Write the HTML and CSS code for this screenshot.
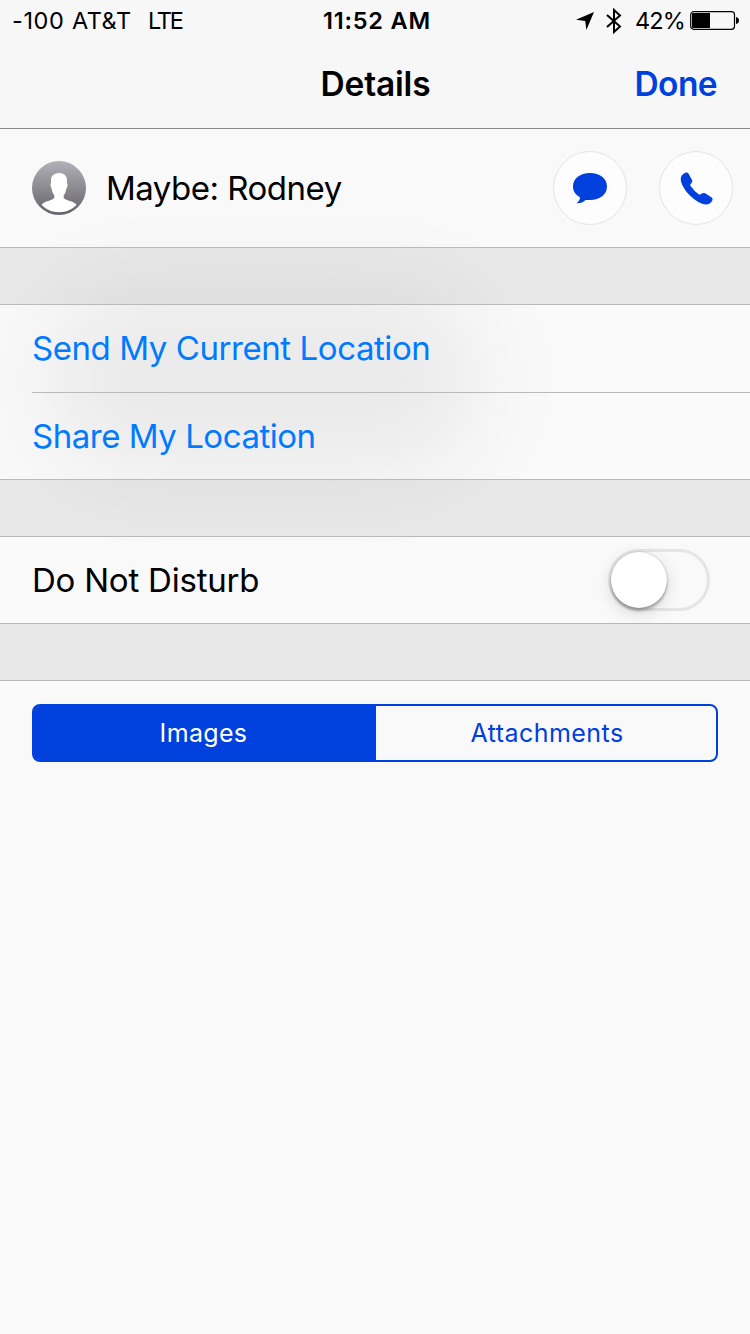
FILE: index.html
```
<!DOCTYPE html>
<html lang="en">
<head>
<meta charset="utf-8">
<title>Details</title>
<link rel="stylesheet" href="styles.css">
</head>
<body>
<div class="screen">
  <div class="glow"></div>
  <header class="top">
    <div class="status">
      <div class="status-left"><span class="signal">-100</span><span class="carrier">AT&amp;T</span><span class="network">LTE</span></div>
      <div class="clock"><span>11:52 AM</span></div>
      <div class="status-right">
        <svg class="location" width="18" height="18" viewBox="0 0 18 18"><path d="M18 0 10.4 18 9.2 9 0 7.8Z"/></svg>
        <svg class="bluetooth" width="16" height="26" viewBox="0 0 16 26"><path d="M1 7 14 18.6 8 24V2L14 7.4 1 19" fill="none" stroke="#000" stroke-width="2"/></svg>
        <span class="percent">42%</span>
        <svg class="battery" width="50" height="19" viewBox="0 0 50 19"><rect x=".7" y=".7" width="43.8" height="17.6" rx="3" fill="none" stroke="#000" stroke-width="1.2"/><path d="M2 2.8Q2 2 2.8 2H20V17H2.8Q2 17 2 16.200ZM46 6q3 .5 3 3.500T46 13Z"/></svg>
      </div>
    </div>
    <nav class="nav">
      <span class="side"></span>
      <h1 class="title"><span>Details</span></h1>
      <a class="done side">Done</a>
    </nav>
  </header>
  <section class="contact">
    <svg class="avatar" width="54" height="54" viewBox="0 0 54 54">
      <defs><linearGradient id="shade" x2="0" y2="1"><stop offset="0" stop-color="#b2b1b7"/><stop offset="1" stop-color="#656369"/></linearGradient></defs>
      <circle cx="27" cy="27" r="27" fill="url(#shade)"/>
      <path d="M27.300 12C32 12 35.300 14.800 35 20V22.200C36 22.500 35.500 27 34.300 27.500C34 30.500 33 33 31.700 34.300V37C33 39.500 42 40 44.600 43.700C40 48.500 34 51.200 27 51.200S14 48.500 9.600 43.700C12 40 21 39.500 22.300 37V34.300C21 33 20 30.500 19.700 27.500C18.700 27 18 22.500 19 22.200V20C18.700 14.800 22.300 12 27.300 12Z" fill="#fff"/>
    </svg>
    <span class="name">Maybe: Rodney</span>
    <button class="round" aria-label="Message"><svg width="34" height="31" viewBox="0 0 34 31"><path d="M17 0C27 0 34 5.500 34 13.500S27 27 17 27H12.500C10 29.400 7 30.600 3.300 30.200C5.800 28.500 7 26.500 7 24.200C2.500 22 0 18.300 0 13.500C0 5.500 7 0 17 0Z"/></svg></button>
    <button class="round" aria-label="Call"><svg class="phone" width="33" height="33" viewBox="0 0 33 33"><path transform="translate(.7 .5)" d="M4.600.3Q6.700-.6 7.700 1L11.500 7.800Q12 9.200 10.900 10.400L9.800 11.600Q9.200 12.500 9.900 13.600Q13.300 18.600 18 21.800Q19 22.500 20 21.700L21.600 20.800Q23 20 24.500 20.800L31 25Q32.500 26.100 31.700 27.800Q29.300 32.300 25 32.100Q18 31.500 9.500 23.300C4 18 .4 11.500 0 7Q-.1 2.200 4.600.3Z"/></svg></button>
  </section>
  <div class="gap"></div>
  <section class="locations">
    <a class="row link send"><span>Send My Current Location</span></a>
    <a class="row link share"><span>Share My Location</span></a>
  </section>
  <div class="gap"></div>
  <section class="row dnd">
    <span>Do Not Disturb</span>
    <span class="switch" role="switch" aria-checked="false"><span class="knob"></span></span>
  </section>
  <div class="gap"></div>
  <div class="tabs">
    <button class="tab active"><span>Images</span></button>
    <button class="tab"><span>Attachments</span></button>
  </div>
</div>
</body>
</html>
```
FILE: styles.css
```
* { box-sizing: border-box; }
body { margin: 0; background: #f9f9f9; color: #000; font-family: Inter, "Liberation Sans", sans-serif; }
button { font: inherit; border: 0; padding: 0; margin: 0; }
svg { display: block; flex: none; overflow: visible; }
.screen { position: relative; isolation: isolate; width: 750px; height: 1334px; overflow: hidden; background: #f9f9f9; }
.glow { position: absolute; z-index: -1; left: 50px; top: 290px; width: 425px; height: 180px; border-radius: 75px; background: rgba(25, 25, 45, .068); filter: blur(42px); }
.top { height: 129px; background: #f7f7f7; border-bottom: 1px solid #88878e; }
.status { height: 41px; display: grid; grid-template-columns: 1fr 110px 1fr; align-items: center; font-size: 23.5px; line-height: 41px; white-space: nowrap; }
.status-left { display: flex; padding-left: 12px; }
.signal { width: 60px; letter-spacing: .6px; }
.carrier { width: 76px; letter-spacing: .5px; }
.network { letter-spacing: -2.2px; }
.clock { font-weight: 600; text-align: center; letter-spacing: .8px; padding-left: 3px; }
.status-right { display: flex; align-items: center; justify-content: flex-end; padding-right: 10px; }
.bluetooth { margin-left: 12px; }
.percent { margin-left: 13px; width: 55px; letter-spacing: -.9px; }
.nav { height: 87px; display: grid; grid-template-columns: 1fr auto 1fr; align-items: center; padding: 0 33px 0 32px; font-size: 33.5px; line-height: 87px; }
.title { margin: 0; font-size: inherit; font-weight: 600; letter-spacing: -.2px; padding-left: 2px; }
.done { text-align: right; color: #0040dd; font-weight: 600; letter-spacing: -.6px; }
.contact { height: 119px; display: flex; align-items: center; padding: 0 17px 0 32px; border-bottom: 1px solid #b9b9be; }
.name { margin-left: 20px; flex: 1; font-size: 33px; letter-spacing: -.5px; }
.round { width: 74px; height: 74px; display: grid; place-items: center; border-radius: 50%; border: 1px solid #e5e5e6; background: #fdfdfd; fill: #0040dd; }
.round + .round { margin-left: 32px; }
.gap { height: 57px; background: rgba(0, 0, 0, .068); border-bottom: 1px solid #b9b9be; }
.locations { padding-left: 32px; border-bottom: 1px solid #b9b9be; }
.row { display: flex; align-items: center; font-size: 33px; }
.link { height: 87px; color: #007aff; letter-spacing: -.47px; }
.send { height: 88px; border-bottom: 1px solid #b9b9be; padding-bottom: 2px; letter-spacing: -.43px; }
.share { height: 86px; }
.dnd { height: 87px; justify-content: space-between; padding: 0 40px 0 32px; border-bottom: 1px solid #b9b9be; letter-spacing: -.22px; }
.switch { width: 102px; height: 62px; padding: 0; border: 3px solid #e5e5e5; border-radius: 31px; }
.knob { display: block; width: 56px; height: 56px; border-radius: 50%; background: #fff; box-shadow: 0 5px 16px rgba(0, 0, 0, .14), 0 3px 3px rgba(0, 0, 0, .26), 0 0 2px rgba(0, 0, 0, .25); }
.tabs { display: flex; height: 58px; margin: 23px 32px 0; border: 2px solid #0040dd; border-radius: 8px; background: #f9f9f9; }
.tab { flex: 1; background: transparent; color: #0040dd; font-size: 25px; letter-spacing: .45px; padding-left: 2px; }
.tab.active { flex: 0 0 342px; background: #0040dd; color: #fff; letter-spacing: .35px; padding: 0 3px 0 0; border-radius: 5px 0 0 5px; }
```
